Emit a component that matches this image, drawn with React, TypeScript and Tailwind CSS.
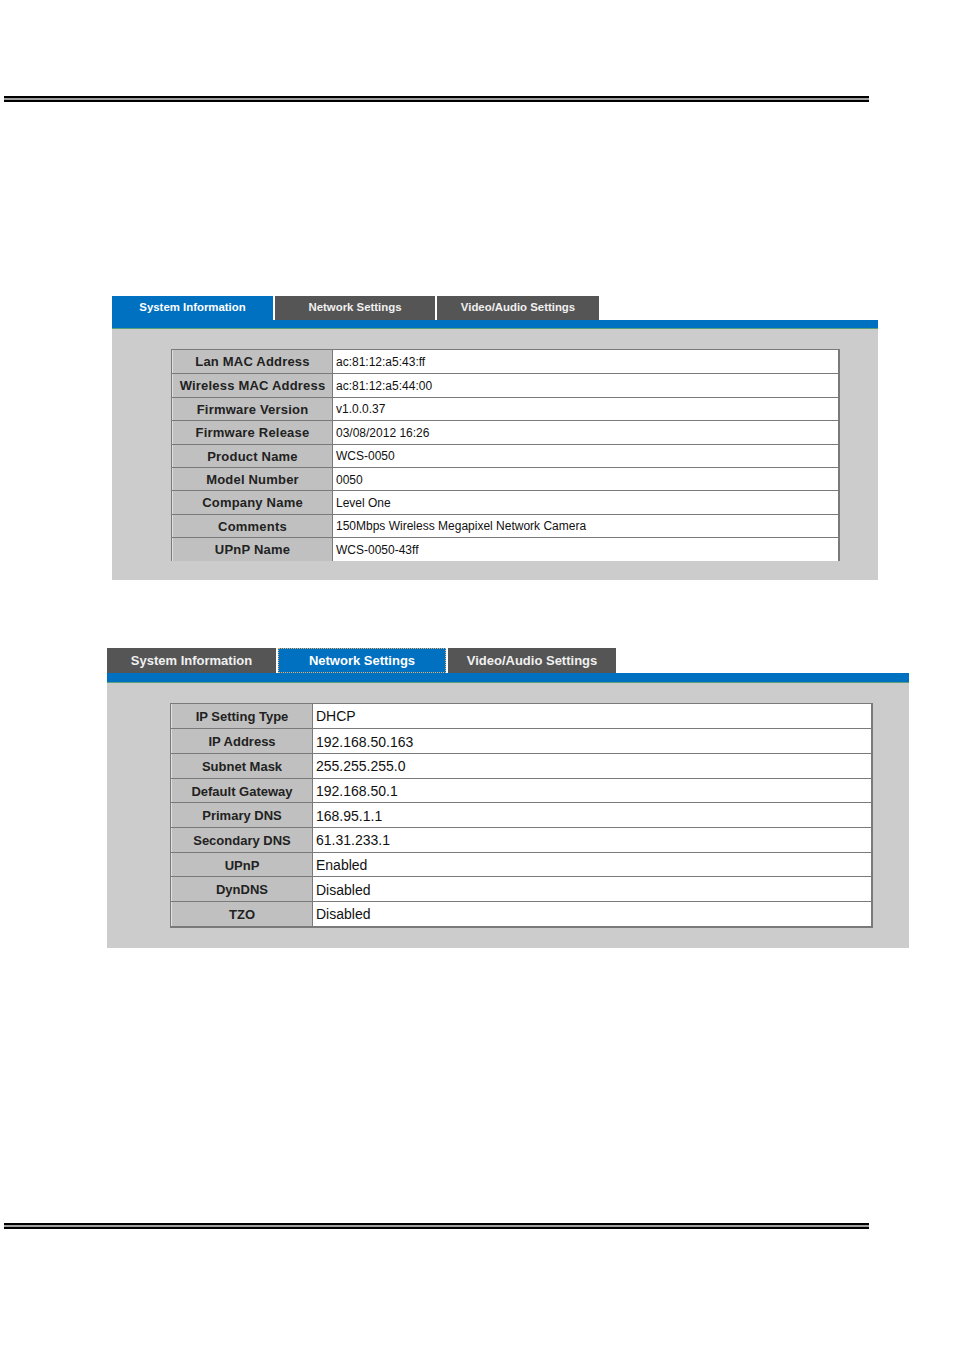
const sysRows: [string, string][] = [
  ['Lan MAC Address', 'ac:81:12:a5:43:ff'],
  ['Wireless MAC Address', 'ac:81:12:a5:44:00'],
  ['Firmware Version', 'v1.0.0.37'],
  ['Firmware Release', '03/08/2012 16:26'],
  ['Product Name', 'WCS-0050'],
  ['Model Number', '0050'],
  ['Company Name', 'Level One'],
  ['Comments', '150Mbps Wireless Megapixel Network Camera'],
  ['UPnP Name', 'WCS-0050-43ff'],
];

const netRows: [string, string][] = [
  ['IP Setting Type', 'DHCP'],
  ['IP Address', '192.168.50.163'],
  ['Subnet Mask', '255.255.255.0'],
  ['Default Gateway', '192.168.50.1'],
  ['Primary DNS', '168.95.1.1'],
  ['Secondary DNS', '61.31.233.1'],
  ['UPnP', 'Enabled'],
  ['DynDNS', 'Disabled'],
  ['TZO', 'Disabled'],
];

function Rule() {
  return (
    <div className="ml-[4px] w-[865px] h-[6px] border-y-2 border-black bg-[#a0a0a0]" />
  );
}

export default function App() {
  return (
    <div className="w-[954px] h-[1350px] bg-white flex flex-col font-['Liberation_Sans',Arial,sans-serif]">
      <div className="h-[96px]" />
      <Rule />

      {/* system information panel */}
      <div className="mt-[194px] ml-[112px] w-[766px]">
        <div className="flex h-[24px] gap-[2px] bg-white">
          <div className="w-[161px] bg-[#0070c0] text-white text-[11.4px] font-bold flex items-center justify-center">
            System Information
          </div>
          <div className="w-[160px] bg-[#555555] text-[#f0f0f0] text-[11.4px] font-bold flex items-center justify-center">
            Network Settings
          </div>
          <div className="w-[162px] bg-[#555555] text-[#f0f0f0] text-[11.4px] font-bold flex items-center justify-center">
            Video/Audio Settings
          </div>
        </div>
        <div className="h-[9px] bg-[#0070c0] border-b border-[#5a9e7a]" />
        <div className="bg-[#cccccc] pt-[20px] pb-[19px] pl-[59px]">
          <div className="w-[669px] border-t border-l border-r-2 border-[#7a7a7a]">
            {sysRows.map(([k, v], i) => (
              <div key={k} className={`flex h-[23.4px] ${i > 0 ? 'border-t border-[#7a7a7a]' : ''}`}>
                <div className="w-[161px] shrink-0 bg-[#c0c0c0] border-r border-[#7a7a7a] border-l border-l-[#e0e0e0] text-[13px] tracking-[0.2px] font-bold text-[#222] flex items-center justify-center pt-[1px]">
                  {k}
                </div>
                <div className="flex-1 bg-white text-[12px] text-[#111] flex items-center pl-[3px] pt-[1px]">{v}</div>
              </div>
            ))}
          </div>
        </div>
      </div>

      {/* network settings panel */}
      <div className="mt-[68px] ml-[107px] w-[802px]">
        <div className="flex h-[25px] gap-[2px] bg-white">
          <div className="w-[169px] bg-[#555555] text-[#f0f0f0] text-[13px] font-bold flex items-center justify-center pt-[1px]">
            System Information
          </div>
          <div className="w-[168px] bg-[#0070c0] text-white text-[13px] font-bold flex items-center justify-center border border-dotted border-[#e8b070] pt-[1px]">
            Network Settings
          </div>
          <div className="w-[168px] bg-[#555555] text-[#f0f0f0] text-[13px] font-bold flex items-center justify-center pt-[1px]">
            Video/Audio Settings
          </div>
        </div>
        <div className="h-[10px] bg-[#0070c0] border-b border-[#5a9e7a]" />
        <div className="bg-[#cccccc] pt-[20px] pb-[20px] pl-[63px]">
          <div className="w-[703px] border border-r-2 border-b-2 border-[#7a7a7a]">
            {netRows.map(([k, v], i) => (
              <div key={k} className={`flex h-[24.7px] ${i > 0 ? 'border-t border-[#7a7a7a]' : ''}`}>
                <div className="w-[142px] shrink-0 bg-[#c0c0c0] border-r border-[#7a7a7a] border-l border-l-[#e0e0e0] text-[13px] font-bold text-[#222] flex items-center justify-center pt-[2px]">
                  {k}
                </div>
                <div className="flex-1 bg-white text-[14px] text-[#111] flex items-center pl-[3px] pt-[2px]">{v}</div>
              </div>
            ))}
          </div>
        </div>
      </div>

      <div className="mt-[275px]">
        <Rule />
      </div>
    </div>
  );
}
